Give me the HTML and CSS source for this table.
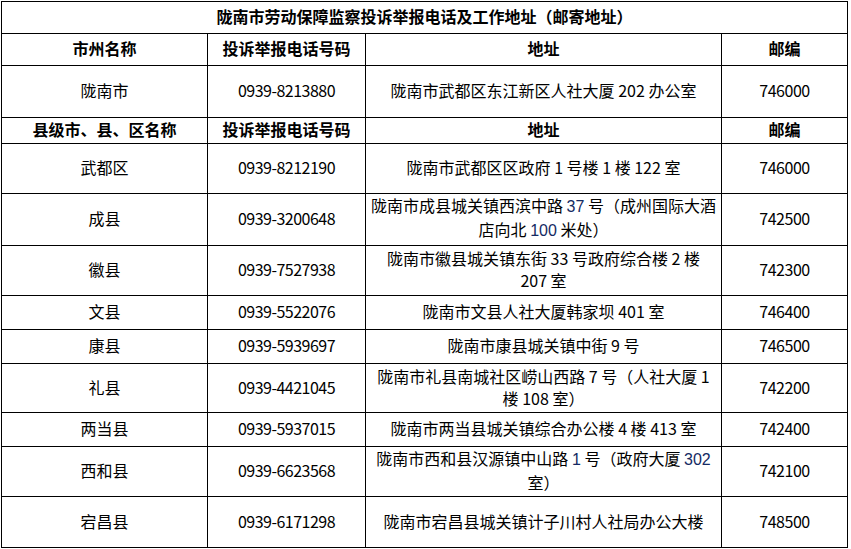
FILE: index.html
```html
<!DOCTYPE html>
<html lang="zh-CN">
<head>
<meta charset="utf-8">
<title>陇南市劳动保障监察投诉举报电话及工作地址</title>
<link rel="stylesheet" href="styles.css">
</head>
<body>
<div class="page">
<table class="contacts">
  <colgroup>
    <col class="c-name">
    <col class="c-phone">
    <col class="c-addr">
    <col class="c-zip">
  </colgroup>
  <tr class="r32"><th colspan="4" class="title">陇南市劳动保障监察投诉举报电话及工作地址（邮寄地址）</th></tr>
  <tr class="r32"><th>市州名称</th><th>投诉举报电话号码</th><th>地址</th><th>邮编</th></tr>
  <tr class="r52"><td>陇南市</td><td class="tel">0939-8213880</td><td>陇南市武都区东江新区人社大厦 202 办公室</td><td class="tel">746000</td></tr>
  <tr class="r25"><th>县级市、县、区名称</th><th>投诉举报电话号码</th><th>地址</th><th>邮编</th></tr>
  <tr class="r50"><td>武都区</td><td class="tel">0939-8212190</td><td>陇南市武都区区政府 1 号楼 1 楼 122 室</td><td class="tel">746000</td></tr>
  <tr class="r51"><td>成县</td><td class="tel">0939-3200648</td><td>陇南市成县城关镇西滨中路 <span class="num">37</span> 号（成州国际大酒<br>店向北 <span class="num">100</span> 米处）</td><td class="tel">742500</td></tr>
  <tr class="r50"><td>徽县</td><td class="tel">0939-7527938</td><td>陇南市徽县城关镇东街 33 号政府综合楼 2 楼<br>207 室</td><td class="tel">742300</td></tr>
  <tr class="r34"><td>文县</td><td class="tel">0939-5522076</td><td>陇南市文县人社大厦韩家坝 401 室</td><td class="tel">746400</td></tr>
  <tr class="r34"><td>康县</td><td class="tel">0939-5939697</td><td>陇南市康县城关镇中街 9 号</td><td class="tel">746500</td></tr>
  <tr class="r49"><td>礼县</td><td class="tel">0939-4421045</td><td>陇南市礼县南城社区崂山西路 7 号（人社大厦 1<br>楼 108 室）</td><td class="tel">742200</td></tr>
  <tr class="r34"><td>两当县</td><td class="tel">0939-5937015</td><td>陇南市两当县城关镇综合办公楼 4 楼 413 室</td><td class="tel">742400</td></tr>
  <tr class="r50"><td>西和县</td><td class="tel">0939-6623568</td><td>陇南市西和县汉源镇中山路 <span class="num">1</span> 号（政府大厦 <span class="num">302</span><br>室）</td><td class="tel">742100</td></tr>
  <tr class="r51"><td>宕昌县</td><td class="tel">0939-6171298</td><td>陇南市宕昌县城关镇计子川村人社局办公大楼</td><td class="tel">748500</td></tr>
</table>
</div>
</body>
</html>
```

FILE: styles.css
```css
html, body {
  margin: 0;
  padding: 0;
  background: #ffffff;
}

.page {
  padding: 1px 0 0 1px;
}

.contacts {
  border-collapse: collapse;
  table-layout: fixed;
  width: 846px;
  font-family: "Noto Sans CJK SC", "Noto Sans", sans-serif;
  font-size: 16px;
  color: #000;
}

.c-name { width: 206px; }
.c-phone { width: 158px; }
.c-addr { width: 356px; }
.c-zip { width: 126px; }

.contacts th,
.contacts td {
  border: 1px solid #000;
  padding: 0 4px 3px;
  text-align: center;
  vertical-align: middle;
  line-height: 22px;
  white-space: nowrap;
  overflow: hidden;
}

.contacts th {
  font-weight: 700;
}

.contacts td {
  font-weight: 400;
}

.contacts td.tel {
  letter-spacing: -0.5px;
}

.num {
  font-family: "Liberation Sans", Arial, sans-serif;
  color: #142a63;
  letter-spacing: 0;
}

.r25 { height: 25px; }
.r32 { height: 32px; }
.r34 { height: 34px; }
.r49 { height: 49px; }
.r50 { height: 50px; }
.r51 { height: 51px; }
.r52 { height: 52px; }
```
